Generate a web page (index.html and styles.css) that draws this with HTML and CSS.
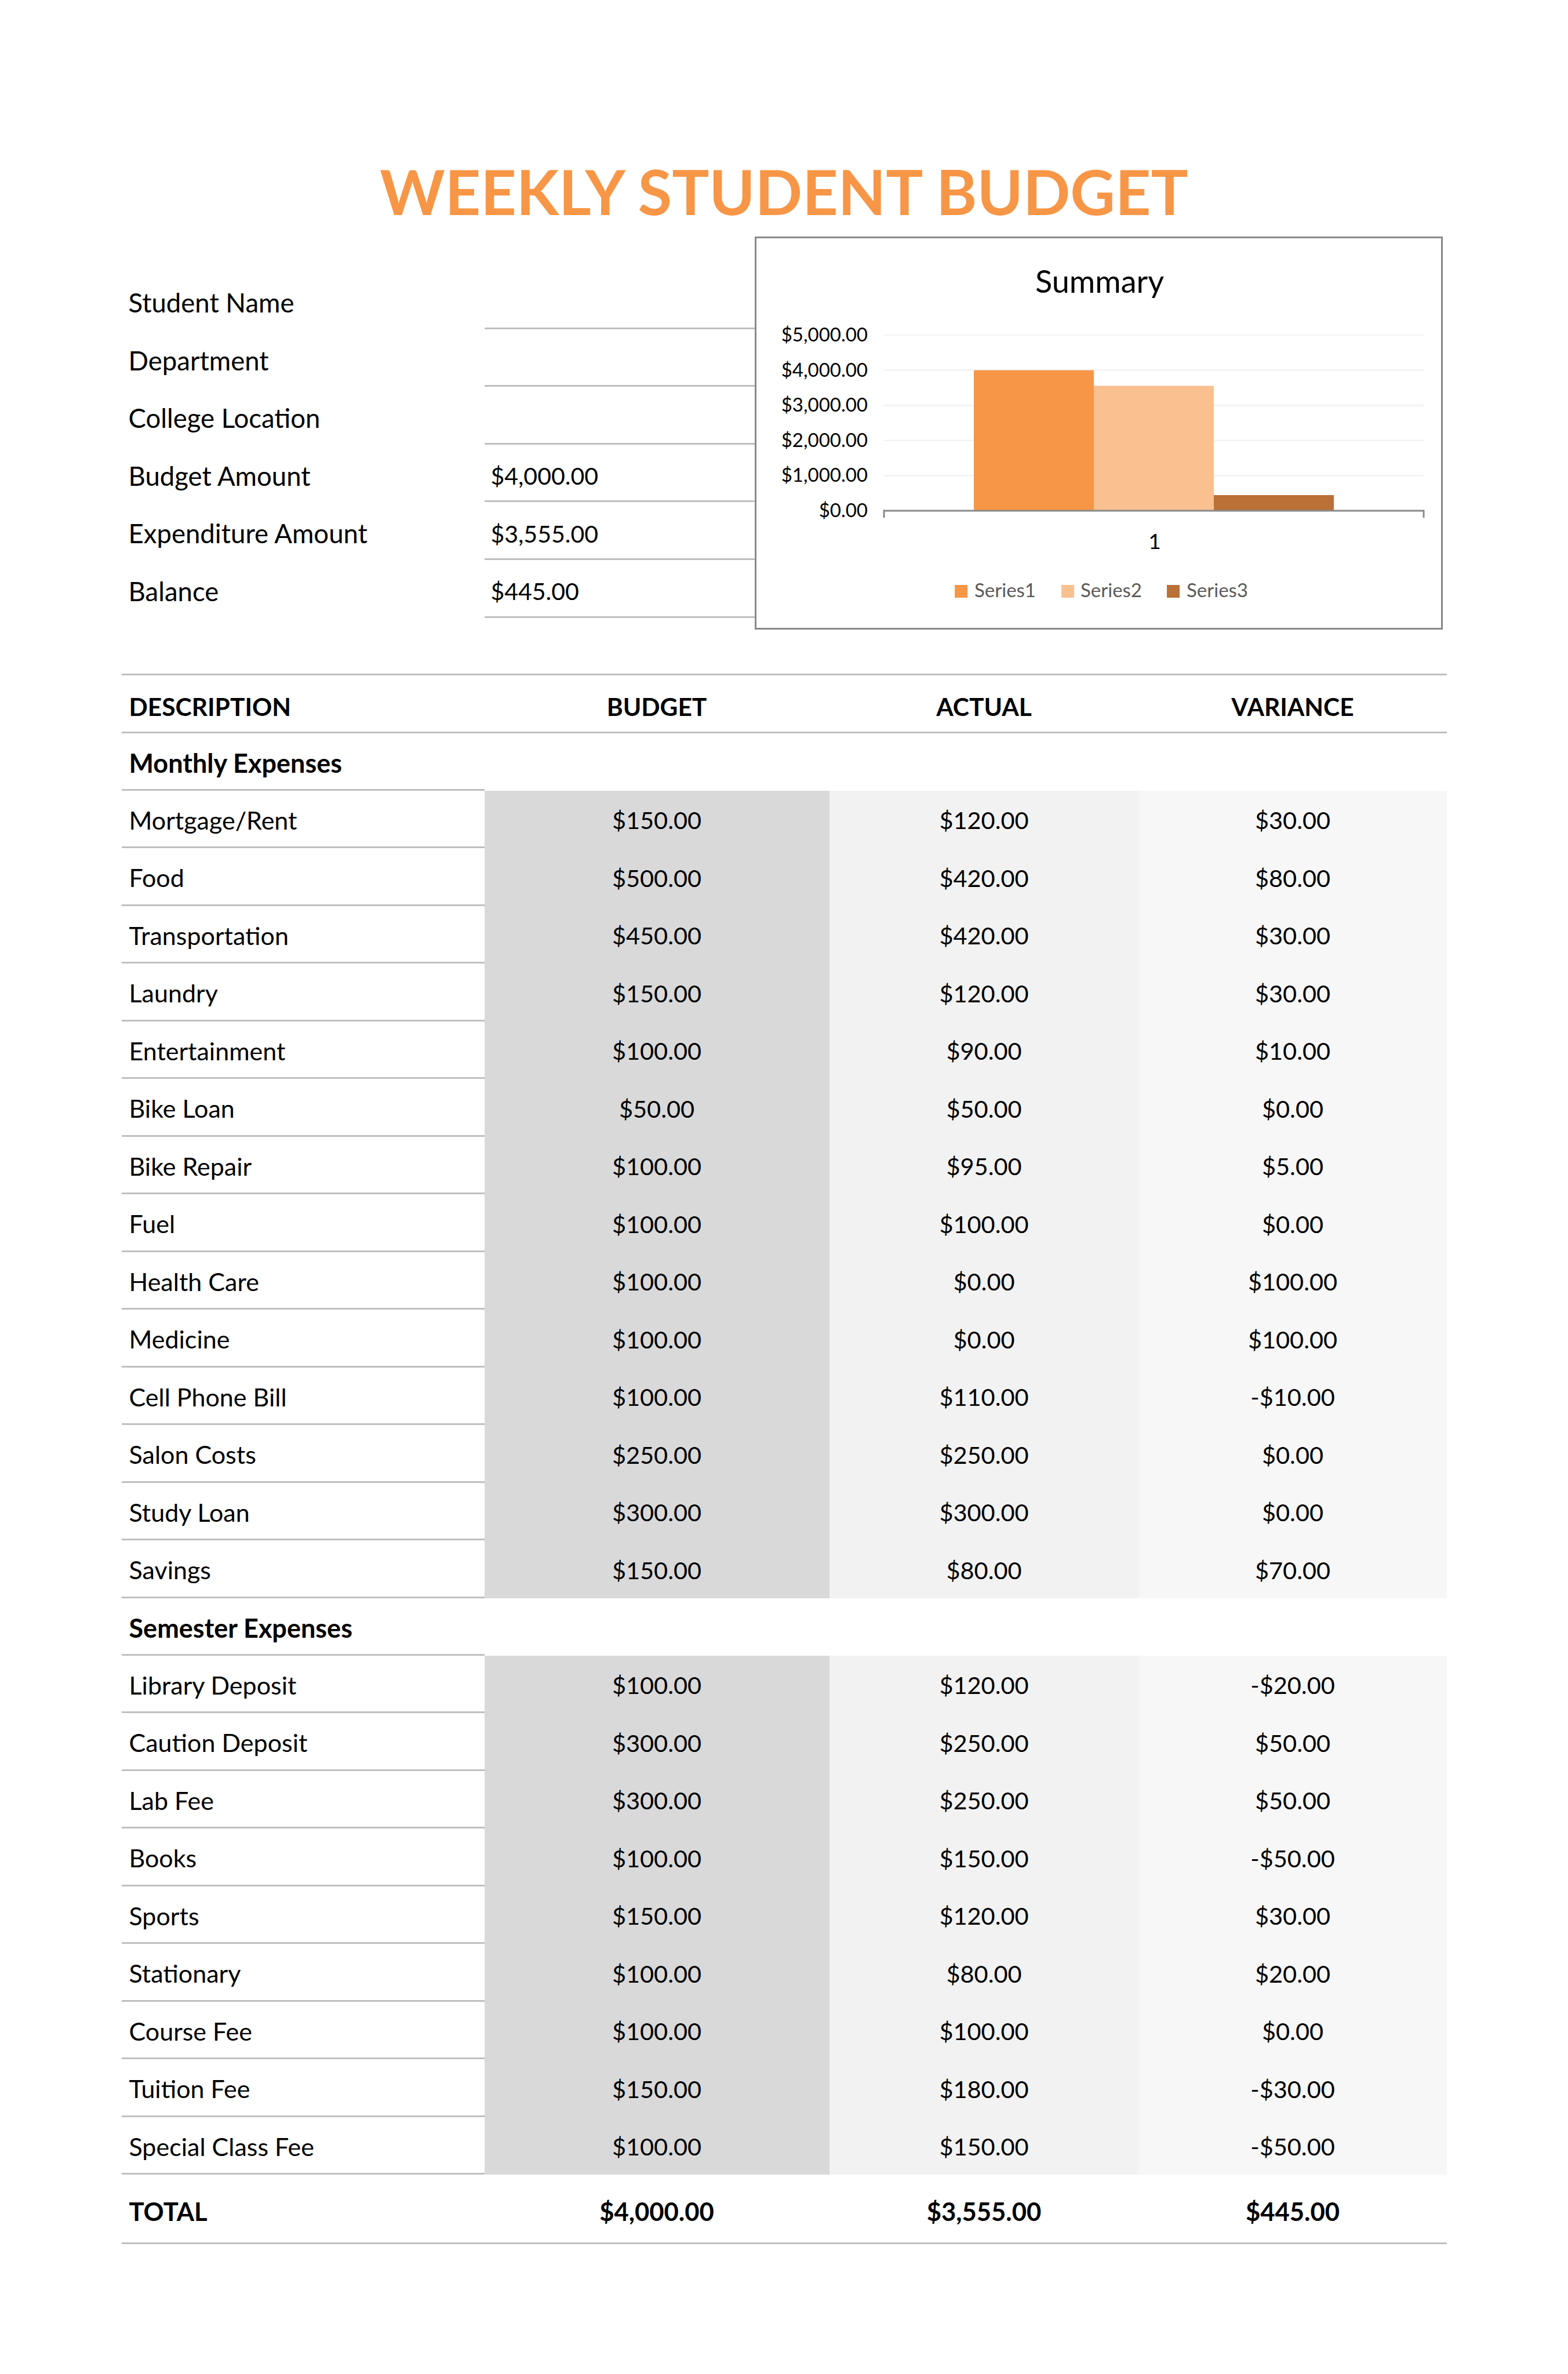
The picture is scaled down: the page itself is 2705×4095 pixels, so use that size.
FILE: index.html
```html
<!DOCTYPE html>
<html lang="en">
<head>
<meta charset="utf-8">
<title>Weekly Student Budget</title>
<link rel="stylesheet" href="styles.css">
</head>
<body>
<div class="page">
  <h1 class="title">WEEKLY STUDENT BUDGET</h1>

  <div class="top">
    <div class="info">
      <div class="info-row"><div class="info-label">Student Name</div><div class="info-value"></div></div>
      <div class="info-row"><div class="info-label">Department</div><div class="info-value"></div></div>
      <div class="info-row"><div class="info-label">College Location</div><div class="info-value"></div></div>
      <div class="info-row"><div class="info-label">Budget Amount</div><div class="info-value">$4,000.00</div></div>
      <div class="info-row"><div class="info-label">Expenditure Amount</div><div class="info-value">$3,555.00</div></div>
      <div class="info-row"><div class="info-label">Balance</div><div class="info-value">$445.00</div></div>
    </div>

    <div class="chart">
      <svg class="chart-svg" width="1181" height="672" viewBox="0 0 1181 672" xmlns="http://www.w3.org/2000/svg">
        <text class="chart-title" x="592" y="94" text-anchor="middle">Summary</text>
        <g class="grid">
          <line x1="220" y1="167" x2="1151" y2="167"/>
          <line x1="220" y1="227.6" x2="1151" y2="227.6"/>
          <line x1="220" y1="288.2" x2="1151" y2="288.2"/>
          <line x1="220" y1="348.8" x2="1151" y2="348.8"/>
          <line x1="220" y1="409.4" x2="1151" y2="409.4"/>
        </g>
        <g class="ylabels" text-anchor="end">
          <text x="192" y="178">$5,000.00</text>
          <text x="192" y="238.6">$4,000.00</text>
          <text x="192" y="299.2">$3,000.00</text>
          <text x="192" y="359.8">$2,000.00</text>
          <text x="192" y="420.4">$1,000.00</text>
          <text x="192" y="481">$0.00</text>
        </g>
        <rect x="375" y="227.6" width="207" height="242.4" fill="#f79646"/>
        <rect x="582" y="254.5" width="207" height="215.5" fill="#fac090"/>
        <rect x="789" y="443" width="207" height="27" fill="#b97137"/>
        <g class="axis">
          <line x1="220" y1="470" x2="1151" y2="470"/>
          <line x1="220" y1="468.5" x2="220" y2="482"/>
          <line x1="1151" y1="468.5" x2="1151" y2="482"/>
        </g>
        <text class="xlabel" x="687" y="536" text-anchor="middle">1</text>
        <rect x="342" y="598" width="22" height="22" fill="#f79646"/>
        <text class="legend" x="376" y="619">Series1</text>
        <rect x="526" y="598" width="22" height="22" fill="#fac090"/>
        <text class="legend" x="559" y="619">Series2</text>
        <rect x="708" y="598" width="22" height="22" fill="#b97137"/>
        <text class="legend" x="742" y="619">Series3</text>
      </svg>
    </div>
  </div>

  <div class="table">
    <div class="row head">
      <div class="c desc">DESCRIPTION</div><div class="c">BUDGET</div><div class="c">ACTUAL</div><div class="c">VARIANCE</div>
    </div>

    <div class="row section">
      <div class="c desc">Monthly Expenses</div><div class="c"></div><div class="c"></div><div class="c"></div>
    </div>
    <div class="row item"><div class="c desc">Mortgage/Rent</div><div class="c b">$150.00</div><div class="c a">$120.00</div><div class="c v">$30.00</div></div>
    <div class="row item"><div class="c desc">Food</div><div class="c b">$500.00</div><div class="c a">$420.00</div><div class="c v">$80.00</div></div>
    <div class="row item"><div class="c desc">Transportation</div><div class="c b">$450.00</div><div class="c a">$420.00</div><div class="c v">$30.00</div></div>
    <div class="row item"><div class="c desc">Laundry</div><div class="c b">$150.00</div><div class="c a">$120.00</div><div class="c v">$30.00</div></div>
    <div class="row item"><div class="c desc">Entertainment</div><div class="c b">$100.00</div><div class="c a">$90.00</div><div class="c v">$10.00</div></div>
    <div class="row item"><div class="c desc">Bike Loan</div><div class="c b">$50.00</div><div class="c a">$50.00</div><div class="c v">$0.00</div></div>
    <div class="row item"><div class="c desc">Bike Repair</div><div class="c b">$100.00</div><div class="c a">$95.00</div><div class="c v">$5.00</div></div>
    <div class="row item"><div class="c desc">Fuel</div><div class="c b">$100.00</div><div class="c a">$100.00</div><div class="c v">$0.00</div></div>
    <div class="row item"><div class="c desc">Health Care</div><div class="c b">$100.00</div><div class="c a">$0.00</div><div class="c v">$100.00</div></div>
    <div class="row item"><div class="c desc">Medicine</div><div class="c b">$100.00</div><div class="c a">$0.00</div><div class="c v">$100.00</div></div>
    <div class="row item"><div class="c desc">Cell Phone Bill</div><div class="c b">$100.00</div><div class="c a">$110.00</div><div class="c v">-$10.00</div></div>
    <div class="row item"><div class="c desc">Salon Costs</div><div class="c b">$250.00</div><div class="c a">$250.00</div><div class="c v">$0.00</div></div>
    <div class="row item"><div class="c desc">Study Loan</div><div class="c b">$300.00</div><div class="c a">$300.00</div><div class="c v">$0.00</div></div>
    <div class="row item"><div class="c desc">Savings</div><div class="c b">$150.00</div><div class="c a">$80.00</div><div class="c v">$70.00</div></div>

    <div class="row section">
      <div class="c desc">Semester Expenses</div><div class="c"></div><div class="c"></div><div class="c"></div>
    </div>
    <div class="row item"><div class="c desc">Library Deposit</div><div class="c b">$100.00</div><div class="c a">$120.00</div><div class="c v">-$20.00</div></div>
    <div class="row item"><div class="c desc">Caution Deposit</div><div class="c b">$300.00</div><div class="c a">$250.00</div><div class="c v">$50.00</div></div>
    <div class="row item"><div class="c desc">Lab Fee</div><div class="c b">$300.00</div><div class="c a">$250.00</div><div class="c v">$50.00</div></div>
    <div class="row item"><div class="c desc">Books</div><div class="c b">$100.00</div><div class="c a">$150.00</div><div class="c v">-$50.00</div></div>
    <div class="row item"><div class="c desc">Sports</div><div class="c b">$150.00</div><div class="c a">$120.00</div><div class="c v">$30.00</div></div>
    <div class="row item"><div class="c desc">Stationary</div><div class="c b">$100.00</div><div class="c a">$80.00</div><div class="c v">$20.00</div></div>
    <div class="row item"><div class="c desc">Course Fee</div><div class="c b">$100.00</div><div class="c a">$100.00</div><div class="c v">$0.00</div></div>
    <div class="row item"><div class="c desc">Tuition Fee</div><div class="c b">$150.00</div><div class="c a">$180.00</div><div class="c v">-$30.00</div></div>
    <div class="row item"><div class="c desc">Special Class Fee</div><div class="c b">$100.00</div><div class="c a">$150.00</div><div class="c v">-$50.00</div></div>

    <div class="row total">
      <div class="c desc">TOTAL</div><div class="c">$4,000.00</div><div class="c">$3,555.00</div><div class="c">$445.00</div>
    </div>
  </div>
</div>
</body>
</html>
```

FILE: styles.css
```css
html, body {
  margin: 0;
  padding: 0;
  background: #ffffff;
}

body {
  font-family: Lato, "Liberation Sans", sans-serif;
  color: #000000;
}

.page {
  width: 2286px;
  margin: 0 auto;
  padding-top: 275px;
}

.title {
  margin: 0;
  font-size: 107px;
  line-height: 109px;
  height: 109px;
  font-weight: 700;
  color: #f79646;
  text-align: center;
}

/* ---------- info + chart ---------- */
.top {
  display: flex;
  margin-top: 24px;
}

.info {
  width: 1092px;
  padding-top: 60px;
}

.info-row {
  display: grid;
  grid-template-columns: 626px 466px;
  height: 99.6px;
}

.info-label,
.info-value {
  box-sizing: border-box;
  display: flex;
  align-items: flex-end;
  border-bottom: 3px solid transparent;
  line-height: 1.2;
}

.info-label {
  font-size: 45.5px;
  padding-left: 12px;
  padding-bottom: 15px;
}

.info-value {
  font-size: 41px;
  padding-left: 11px;
  padding-bottom: 18px;
  border-bottom-color: #bfbfbf;
}

.chart {
  width: 1187px;
  height: 678px;
  box-sizing: border-box;
  border: 3px solid #898989;
  background: #ffffff;
}

.chart-svg {
  display: block;
  font-family: Lato, "Liberation Sans", sans-serif;
}

.chart-title {
  font-size: 54px;
  fill: #000000;
}

.grid line {
  stroke: #f2f2f2;
  stroke-width: 2.5;
}

.ylabels text {
  font-size: 33px;
  fill: #000000;
}

.axis line {
  stroke: #898989;
  stroke-width: 3;
}

.xlabel {
  font-size: 37px;
  fill: #000000;
}

.legend {
  font-size: 33px;
  fill: #595959;
}

/* ---------- table ---------- */
.table {
  margin-top: 75.5px;
}

.row {
  display: grid;
  grid-template-columns: 626px 595px 534px 531px;
  box-sizing: border-box;
}

.c {
  box-sizing: border-box;
  display: flex;
  align-items: flex-end;
  justify-content: center;
  border-bottom: 3px solid transparent;
  line-height: 1.2;
  white-space: nowrap;
}

.c.desc {
  justify-content: flex-start;
  padding-left: 13px;
}

.head {
  height: 103px;
  border-top: 3px solid #bfbfbf;
  border-bottom: 3px solid #bfbfbf;
}

.head .c {
  border-bottom: 0;
  font-size: 42.5px;
  font-weight: 700;
  padding-bottom: 17.4px;
}

.section {
  height: 99px;
}

.section .c {
  font-size: 45px;
  font-weight: 700;
  padding-bottom: 17.9px;
}

.section .c.desc,
.item .c.desc {
  border-bottom-color: #bfbfbf;
}

.item {
  height: 99.5px;
}

.item .c {
  font-size: 41.5px;
  padding-bottom: 20px;
}

.item .c.desc {
  font-size: 43px;
  padding-bottom: 19.6px;
}

.item .b { background: #d9d9d9; }
.item .a { background: #f2f2f2; }
.item .v { background: #f7f7f7; }

.total {
  height: 120px;
  border-bottom: 3px solid #bfbfbf;
}

.total .c {
  border-bottom: 0;
  font-size: 43.6px;
  font-weight: 700;
  padding-bottom: 27.7px;
}
```
